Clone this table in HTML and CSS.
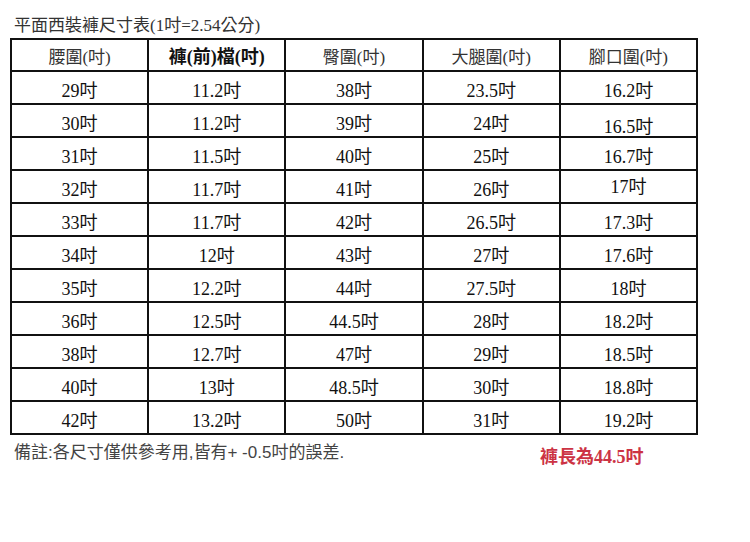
FILE: index.html
```html
<!DOCTYPE html>
<html lang="zh-Hant">
<head>
<meta charset="utf-8">
<title>平面西裝褲尺寸表</title>
<link rel="stylesheet" href="styles.css">
</head>
<body>
<div class="page">
  <h1 class="title">平面西裝褲尺寸表<span class="latin">(1</span>吋<span class="latin">=2.54</span>公分<span class="latin">)</span></h1>
  <table class="size-table">
    <thead>
      <tr>
        <th>腰圍(吋)</th>
        <th class="bold">褲(前)檔(吋)</th>
        <th>臀圍(吋)</th>
        <th>大腿圍(吋)</th>
        <th>腳口圍(吋)</th>
      </tr>
    </thead>
    <tbody>
      <tr><td>29吋</td><td>11.2吋</td><td>38吋</td><td>23.5吋</td><td>16.2吋</td></tr>
      <tr><td>30吋</td><td>11.2吋</td><td>39吋</td><td>24吋</td><td><span class="low">16.5吋</span></td></tr>
      <tr><td>31吋</td><td>11.5吋</td><td>40吋</td><td>25吋</td><td>16.7吋</td></tr>
      <tr><td>32吋</td><td>11.7吋</td><td>41吋</td><td>26吋</td><td><span class="high">17吋</span></td></tr>
      <tr><td>33吋</td><td>11.7吋</td><td>42吋</td><td>26.5吋</td><td>17.3吋</td></tr>
      <tr><td>34吋</td><td>12吋</td><td>43吋</td><td>27吋</td><td>17.6吋</td></tr>
      <tr><td>35吋</td><td>12.2吋</td><td>44吋</td><td>27.5吋</td><td>18吋</td></tr>
      <tr><td>36吋</td><td>12.5吋</td><td>44.5吋</td><td>28吋</td><td>18.2吋</td></tr>
      <tr><td>38吋</td><td>12.7吋</td><td>47吋</td><td>29吋</td><td>18.5吋</td></tr>
      <tr><td>40吋</td><td>13吋</td><td>48.5吋</td><td>30吋</td><td>18.8吋</td></tr>
      <tr><td>42吋</td><td>13.2吋</td><td>50吋</td><td>31吋</td><td>19.2吋</td></tr>
    </tbody>
  </table>
  <div class="notes">
    <p class="note">備註:各尺寸僅供參考用,皆有+ -0.5吋的誤差.</p>
    <p class="length">褲長為44.5吋</p>
  </div>
</div>
</body>
</html>
```

FILE: styles.css
```css
html, body {
  margin: 0;
  padding: 0;
  background: #ffffff;
}

.page {
  padding: 14px 0 0 10px;
  width: 690px;
}

.title {
  margin: 0 0 4px 4px;
  height: 20px;
  font-family: "Noto Sans CJK TC", "Liberation Sans", sans-serif;
  font-weight: normal;
  font-size: 17px;
  line-height: 20px;
  color: #333333;
}

.title .latin {
  font-family: "Liberation Serif", "Noto Sans CJK TC", serif;
  font-size: 17px;
}

.size-table {
  border-collapse: collapse;
  width: 688px;
  table-layout: fixed;
  border: 2px solid #111111;
}

.size-table th,
.size-table td {
  border: 2px solid #111111;
  padding: 0;
  text-align: center;
  color: #111111;
}

.size-table th {
  height: 32px;
  box-sizing: border-box;
  font-family: "Liberation Serif", "Noto Sans CJK TC", serif;
  font-weight: normal;
  font-size: 17px;
  color: #333333;
}

.size-table th.bold {
  font-weight: bold;
  font-size: 18px;
  color: #111111;
}

.size-table td {
  height: 33px;
  font-family: "Liberation Serif", "Noto Sans CJK TC", serif;
  font-size: 18px;
  padding-top: 2px;
  box-sizing: border-box;
}

.low {
  position: relative;
  top: 3px;
}

.high {
  position: relative;
  top: -3px;
}

.notes {
  display: flex;
  align-items: flex-start;
  margin-top: 8px;
}

.note {
  margin: 0 0 0 4px;
  font-family: "Liberation Sans", "Noto Sans CJK TC", sans-serif;
  font-size: 17px;
  line-height: 20px;
  color: #444444;
  width: 526px;
}

.length {
  margin: 5px 0 0 0;
  font-family: "Liberation Serif", "Noto Sans CJK TC", serif;
  font-weight: bold;
  font-size: 18px;
  line-height: 18px;
  color: #cc3344;
}
```
